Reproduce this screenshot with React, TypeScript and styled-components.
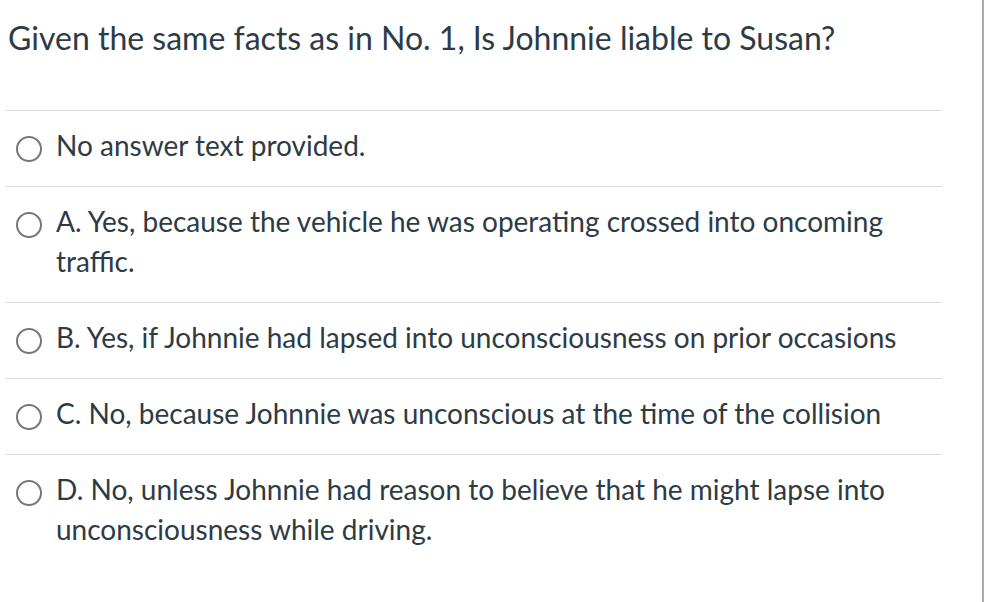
import React from "react";
import styled, { createGlobalStyle } from "styled-components";

const Global = createGlobalStyle`
  html, body { margin: 0; padding: 0; background: #fff; }
  body { font-family: Lato, "Open Sans", sans-serif; color: #2d3b45; }
`;

const Page = styled.div`
  width: 982px;
  height: 602px;
  border-right: 2px solid #ababab;
  box-sizing: content-box;
  overflow: hidden;
`;

const Question = styled.div`
  width: 936px;
  margin-left: 6px;
`;

const Title = styled.h2`
  margin: 0;
  padding: 18px 0 0 2px;
  font-size: 32px;
  font-weight: 400;
  line-height: 40px;
  border-bottom: 1px solid #dadada;
  box-sizing: border-box;
  height: 111px;
`;

const Row = styled.label`
  display: flex;
  align-items: flex-start;
  padding: 14px 0 21px;
  border-bottom: ${p => (p.$last ? "none" : "1px solid #dadada")};
  font-size: 28px;
  line-height: 40px;
`;

const Radio = styled.span`
  flex: none;
  width: 26px;
  height: 26px;
  border: 2px solid #777;
  border-radius: 50%;
  margin: 11px 14px 0 10px;
  box-sizing: border-box;
`;

const Text = styled.span`
  flex: 1;
  padding-right: 30px;
`;

const answers = [
  "No answer text provided.",
  "A. Yes, because the vehicle he was operating crossed into oncoming traffic.",
  "B. Yes, if Johnnie had lapsed into unconsciousness on prior occasions",
  "C. No, because Johnnie was unconscious at the time of the collision",
  "D. No, unless Johnnie had reason to believe that he might lapse into unconsciousness while driving.",
];

export default function App() {
  return (
    <Page>
      <Global />
      <Question>
        <Title>Given the same facts as in No. 1, Is Johnnie liable to Susan?</Title>
        {answers.map((a, i) => (
          <Row key={i} $last={i === answers.length - 1}>
            <Radio />
            <Text>{a}</Text>
          </Row>
        ))}
      </Question>
    </Page>
  );
}
